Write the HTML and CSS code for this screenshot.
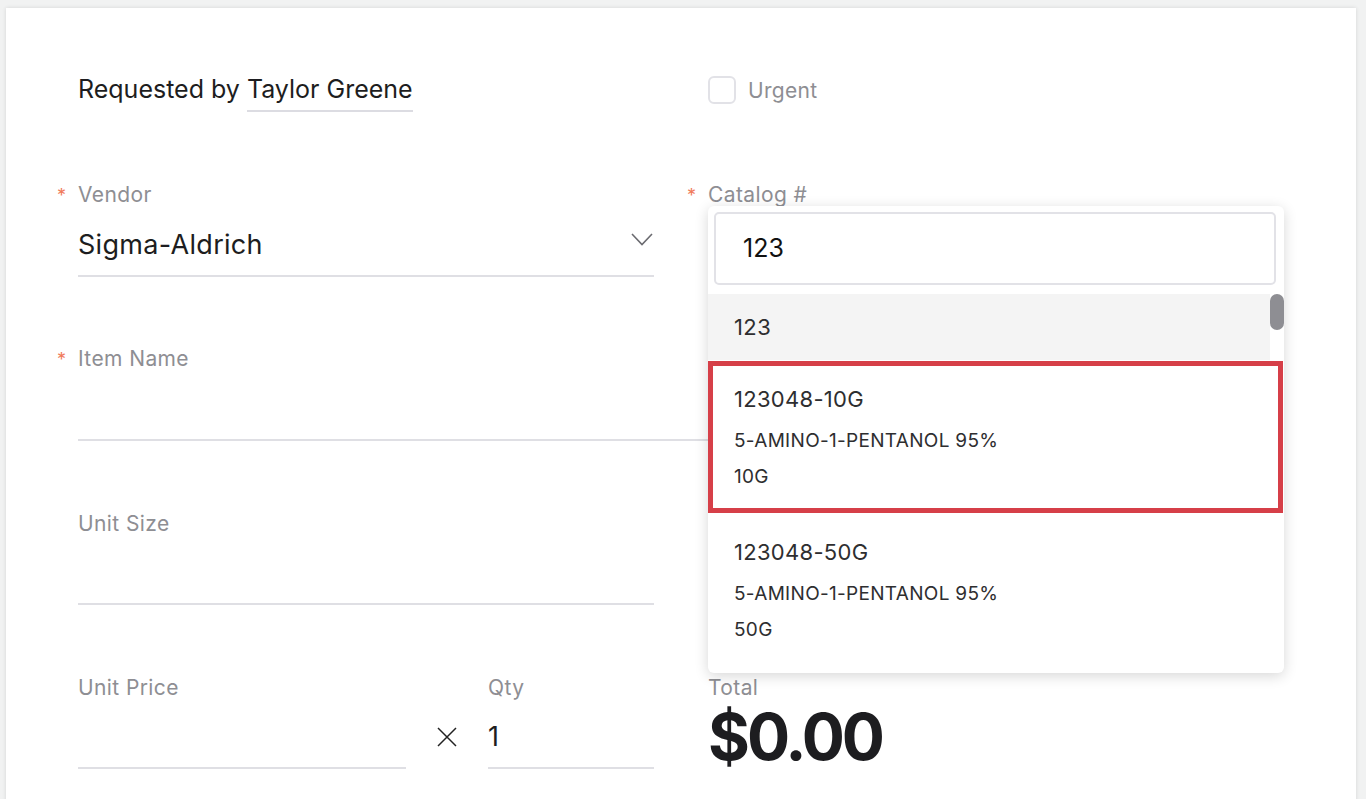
FILE: index.html
```html
<!DOCTYPE html>
<html>
<head>
<meta charset="utf-8">
<link rel="stylesheet" href="styles.css">
</head>
<body>
<div class="card">
  <div class="form">
    <div class="requested">
      <span class="req-label">Requested by</span>
      <span class="req-name">Taylor Greene</span>
    </div>
    <div class="urgent">
      <span class="checkbox"></span>
      <span class="urgent-label">Urgent</span>
    </div>

    <div class="field">
      <div class="label"><span class="star">*</span>Vendor</div>
      <div class="input select">
        <span class="value">Sigma-Aldrich</span>
        <svg class="chevron" width="22" height="13" viewBox="0 0 22 13"><path d="M1 1 L11 11.5 L21 1" fill="none" stroke="#6b6b70" stroke-width="1.6"/></svg>
      </div>
    </div>
    <div class="field catalog">
      <div class="label"><span class="star">*</span>Catalog #</div>
      <div class="input"></div>
      <div class="dropdown">
        <div class="search">123</div>
        <div class="list-wrap">
          <div class="list">
            <div class="opt opt-plain">123</div>
            <div class="opt opt-rich selected">
              <div class="opt-title">123048-10G</div>
              <div class="opt-line">5-AMINO-1-PENTANOL 95%</div>
              <div class="opt-line">10G</div>
            </div>
            <div class="opt opt-rich">
              <div class="opt-title">123048-50G</div>
              <div class="opt-line">5-AMINO-1-PENTANOL 95%</div>
              <div class="opt-line">50G</div>
            </div>
          </div>
          <div class="track"><div class="thumb"></div></div>
        </div>
      </div>
    </div>

    <div class="field wide">
      <div class="label"><span class="star">*</span>Item Name</div>
      <div class="input"></div>
    </div>

    <div class="field">
      <div class="label">Unit Size</div>
      <div class="input"></div>
    </div>
    <div class="field empty"></div>

    <div class="price-row">
      <div class="field price">
        <div class="label">Unit Price</div>
        <div class="input"></div>
      </div>
      <div class="times">
        <svg width="22" height="22" viewBox="0 0 22 22"><path d="M2 2 L20 20 M20 2 L2 20" stroke="#222" stroke-width="1.5" fill="none"/></svg>
      </div>
      <div class="field qty">
        <div class="label">Qty</div>
        <div class="input"><span class="value">1</span></div>
      </div>
    </div>
    <div class="field total">
      <div class="label">Total</div>
      <div class="total-value">$0.00</div>
    </div>
  </div>
</div>
</body>
</html>
```
FILE: styles.css
```css
html, body {
  margin: 0;
  padding: 0;
  background: #f1f2f2;
  font-family: "Inter", "Lato", sans-serif;
  color: #1d1d20;
  overflow: hidden;
}

.card {
  margin: 8px 10px 0 6px;
  background: #fff;
  min-height: 830px;
  padding: 65px 72px 0;
  box-sizing: border-box;
  box-shadow: 0 0 4px rgba(0, 0, 0, 0.12);
}

.form {
  display: grid;
  grid-template-columns: 576px 576px;
  column-gap: 54px;
  row-gap: 71px;
}

.requested {
  font-size: 25px;
  line-height: 32px;
  display: flex;
  align-items: flex-start;
}

.req-label {
  margin-right: 7px;
}

.req-name {
  padding-bottom: 5px;
  border-bottom: 2px solid #dcdce2;
}

.urgent {
  display: flex;
  align-items: center;
  height: 30px;
  padding-top: 2px;
}

.checkbox {
  width: 24px;
  height: 24px;
  border: 2px solid #e2e2e7;
  border-radius: 6px;
  margin-right: 12px;
}

.urgent-label {
  font-size: 21px;
  letter-spacing: 0.3px;
  color: #8e8e93;
}

.field {
  position: relative;
  height: 93px;
}

.field.wide {
  grid-column: 1 / 3;
  margin-bottom: 1px;
}

.label {
  font-size: 21px;
  letter-spacing: 0.4px;
  line-height: 24px;
  color: #8e8e93;
}

.star {
  display: inline-block;
  width: 21px;
  margin-left: -21px;
  color: #f07a5a;
  font-size: 18px;
  letter-spacing: 0;
}

.input {
  height: 67px;
  border-bottom: 2px solid #dfdfe4;
  display: flex;
  align-items: flex-end;
  justify-content: space-between;
  box-sizing: content-box;
}

.value {
  font-size: 27px;
  letter-spacing: 0.3px;
  line-height: 34px;
  padding-bottom: 13px;
}

.chevron {
  margin: 0 1px 29px 0;
}

.dropdown {
  position: absolute;
  left: 0;
  top: 23px;
  width: 576px;
  height: 467px;
  background: #fff;
  border-radius: 6px;
  box-shadow: 0 3px 14px rgba(0, 0, 0, 0.16);
  display: flex;
  flex-direction: column;
  overflow: hidden;
  z-index: 5;
}

.search {
  margin: 6px 8px 8px 6px;
  height: 69px;
  border: 2px solid #e2e2e7;
  border-radius: 5px;
  font-size: 25px;
  line-height: 69px;
  padding-left: 27px;
  color: #111;
}

.list-wrap {
  display: flex;
  flex: 1;
}

.list {
  flex: 1;
}

.track {
  width: 14px;
}

.thumb {
  width: 14px;
  height: 36px;
  margin-top: 1px;
  border-radius: 7px;
  background: #8e8e93;
}

.opt {
  padding-left: 26px;
  color: #2e2e30;
}

.opt-plain {
  height: 66px;
  margin-top: 1px;
  line-height: 66px;
  font-size: 22px;
  letter-spacing: 0.4px;
  background: #f4f4f4;
}

.opt-rich {
  position: relative;
  height: 153px;
  box-sizing: border-box;
  padding-top: 25px;
}

.opt-rich.selected::after {
  content: "";
  position: absolute;
  left: 0;
  top: 1px;
  right: -13px;
  bottom: 0;
  border: 5px solid #d63f48;
}

.opt-title {
  font-size: 22px;
  letter-spacing: 0.3px;
  line-height: 28px;
  margin-bottom: 10px;
}

.opt-line {
  font-size: 19px;
  letter-spacing: 0.3px;
  line-height: 36px;
}

.price-row {
  display: flex;
  align-items: flex-start;
}

.field.price {
  width: 328px;
}

.times {
  width: 82px;
  display: flex;
  justify-content: center;
  padding-top: 50px;
}

.field.qty {
  width: 166px;
}

.total-value {
  font-size: 64px;
  font-weight: 700;
  line-height: 56px;
  margin-top: 9px;
  color: #1d1d20;
  letter-spacing: -3px;
}
```
